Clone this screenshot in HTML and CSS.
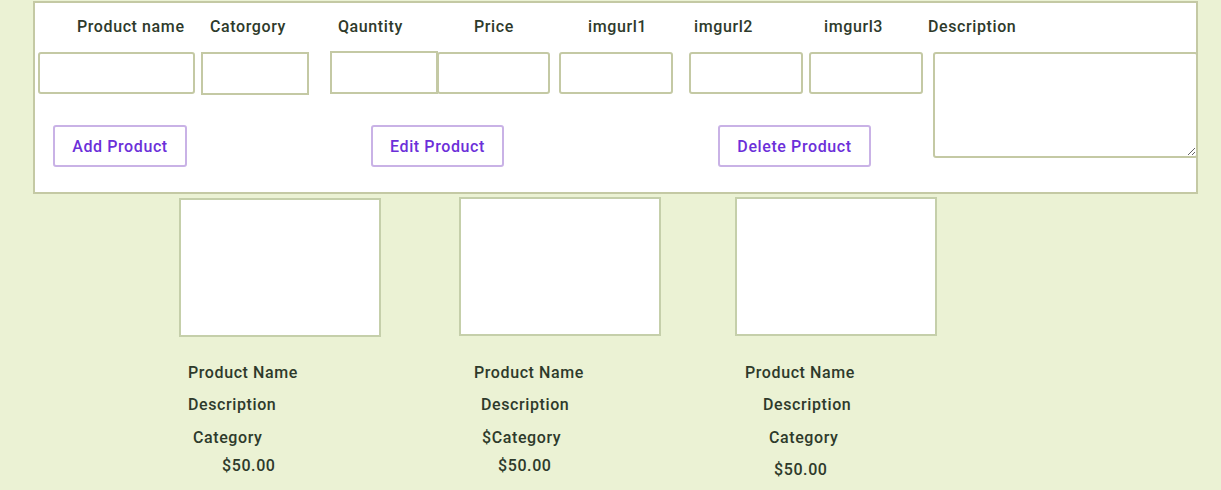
FILE: index.html
```html
<!DOCTYPE html>
<html>
<head>
<meta charset="utf-8">
<link rel="stylesheet" href="styles.css">
</head>
<body>
<div class="panel">
  <div class="labels">
    <span>Product name</span>
    <span>Catorgory</span>
    <span>Qauntity</span>
    <span>Price</span>
    <span>imgurl1</span>
    <span>imgurl2</span>
    <span>imgurl3</span>
    <span>Description</span>
  </div>
  <div class="form-body">
    <div class="left">
      <div class="inputs">
        <input class="field f-name" type="text">
        <input class="field f-cat square" type="text">
        <input class="field f-qty square" type="text">
        <input class="field f-price" type="text">
        <input class="field f-img1" type="text">
        <input class="field f-img2" type="text">
        <input class="field f-img3" type="text">
      </div>
      <div class="buttons">
        <button class="btn b-add">Add Product</button>
        <button class="btn b-edit">Edit Product</button>
        <button class="btn b-del">Delete Product</button>
      </div>
    </div>
    <textarea class="desc"></textarea>
  </div>
</div>

<div class="cards">
  <div class="card c1">
    <div class="img"></div>
    <p class="name i9">Product Name</p>
    <p class="d i9">Description</p>
    <p class="c i14">Category</p>
    <p class="p i43">$50.00</p>
  </div>
  <div class="card c2">
    <div class="img"></div>
    <p class="name i15">Product Name</p>
    <p class="d i22">Description</p>
    <p class="c i23">$Category</p>
    <p class="p i39">$50.00</p>
  </div>
  <div class="card c3">
    <div class="img"></div>
    <p class="name i10">Product Name</p>
    <p class="d i28">Description</p>
    <p class="c i34">Category</p>
    <p class="p p-low i39">$50.00</p>
  </div>
</div>
</body>
</html>
```

FILE: styles.css
```css
* { box-sizing: border-box; }

html, body {
  margin: 0;
  padding: 0;
  background: #ebf2d4;
  font-family: Roboto, "Liberation Sans", sans-serif;
  font-weight: 500;
  font-size: 16px;
  letter-spacing: 0.6px;
  color: #2e3a2b;
}

.panel {
  margin: 1px 0 0 33px;
  width: 1165px;
  height: 193px;
  background: #fff;
  border: 2px solid #c4c9a4;
}

.labels {
  display: grid;
  grid-template-columns: 133px 128px 136px 114px 106px 130px 104px auto;
  padding: 14px 0 0 42px;
  line-height: 20px;
  white-space: nowrap;
}

.form-body {
  display: flex;
  align-items: flex-start;
  margin-top: 15px;
}

.left {
  width: 898px;
  flex: none;
}

.inputs {
  display: flex;
  align-items: flex-start;
  height: 43px;
}

.field {
  height: 42px;
  border: 2px solid #c4c9a4;
  border-radius: 3px;
  background: #fff;
  padding: 0;
  margin: 0;
  flex: none;
  outline: none;
}

.square { border-radius: 0; height: 43px; }

.f-name { width: 157px; margin-left: 3px; }
.f-cat { width: 108px; margin-left: 6px; }
.f-qty { width: 108px; margin-left: 21px; margin-top: -1px; }
.f-price { width: 113px; margin-left: -1px; }
.f-img1 { width: 114px; margin-left: 9px; }
.f-img2 { width: 114px; margin-left: 16px; }
.f-img3 { width: 114px; margin-left: 6px; }

.buttons {
  display: flex;
  margin-top: 30px;
}

.btn {
  height: 42px;
  border: 2px solid #c9b2e6;
  border-radius: 3px;
  background: #fff;
  color: #6c2fd9;
  font-family: inherit;
  font-weight: 500;
  font-size: 16px;
  letter-spacing: 0.6px;
  padding: 0;
  flex: none;
}

.b-add { width: 134px; margin-left: 18px; }
.b-edit { width: 133px; margin-left: 184px; }
.b-del { width: 153px; margin-left: 214px; }

.desc {
  width: 265px;
  height: 106px;
  margin: 0;
  border: 2px solid #c4c9a4;
  border-radius: 3px;
  background: #fff;
  flex: none;
  outline: none;
}

.cards {
  display: flex;
  padding-left: 179px;
  margin-top: 3px;
}

.card { width: 202px; flex: none; }
.c2 { margin-left: 78px; }
.c3 { margin-left: 74px; }

.img {
  height: 139px;
  background: #fff;
  border: 2px solid #c5cfaa;
}
.c1 .img { margin-top: 1px; }

.card p {
  margin: 0;
  line-height: 20px;
  white-space: nowrap;
}

.card .name { margin-top: 27px; }
.c1 .name { margin-top: 26px; }
.card .d { margin-top: 12px; }
.card .c { margin-top: 13px; }
.card .p { margin-top: 8px; }
.card .p-low { margin-top: 12px; }

.i9 { padding-left: 9px; }
.i10 { padding-left: 10px; }
.i14 { padding-left: 14px; }
.i15 { padding-left: 15px; }
.i22 { padding-left: 22px; }
.i23 { padding-left: 23px; }
.i28 { padding-left: 28px; }
.i34 { padding-left: 34px; }
.i39 { padding-left: 39px; }
.i43 { padding-left: 43px; }
```
